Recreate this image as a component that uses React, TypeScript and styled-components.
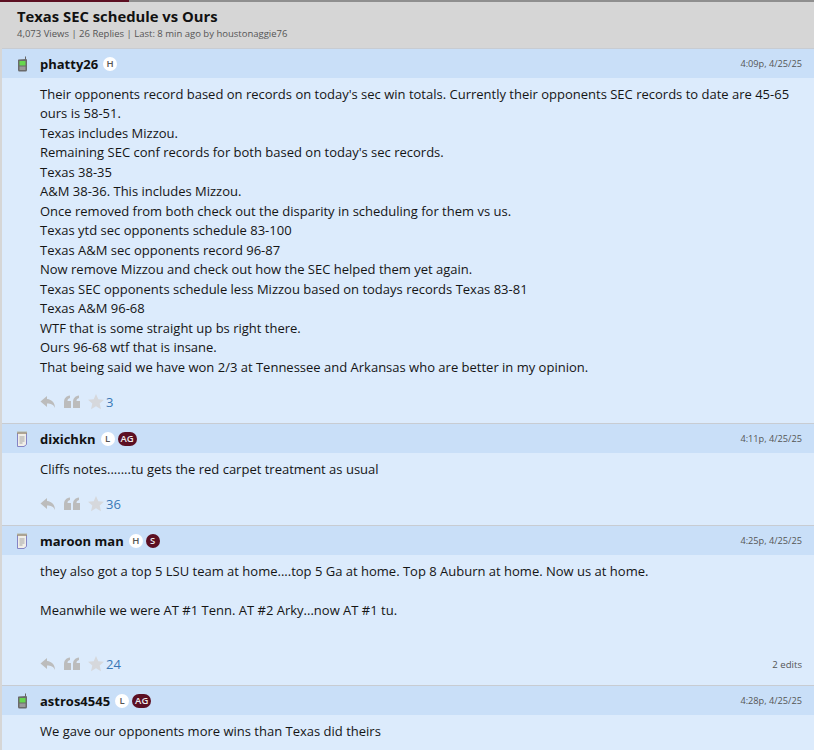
import React from 'react';
import styled, { createGlobalStyle } from 'styled-components';

const GlobalStyle = createGlobalStyle`
  html, body {
    margin: 0;
    padding: 0;
    height: 750px;
    overflow: hidden;
    background: #dcdcdc;
  }
  body {
    font-family: 'Open Sans', 'Noto Sans', sans-serif;
    color: #111;
  }
`;

const Page = styled.div`
  width: 814px;
  height: 750px;
  overflow: hidden;
  padding-left: 2px;
  box-sizing: border-box;
  background: #d6d6d6;
`;
const TopRule = styled.div`
  height: 2px;
  margin-left: -2px;
  background: linear-gradient(to right, #5c0f22 129px, #8f8f8f 129px);
`;
const ThreadHead = styled.header`
  height: 46px;
  padding: 5px 0 0 15px;
  box-sizing: border-box;
  background: #d6d6d6;
`;
const ThreadTitle = styled.h1`
  margin: 0;
  font-size: 14.8px;
  line-height: 18px;
  font-weight: 700;
  color: #111;
`;
const ThreadMeta = styled.div`
  margin-top: 2px;
  font-size: 9.5px;
  line-height: 14px;
  color: #555;
`;
const Post = styled.article`
  background: #dcebfc;
  border-top: 1px solid #c8ccd2;
`;
const PostHead = styled.div`
  height: 29px;
  display: flex;
  align-items: center;
  background: #c9dff8;
  padding: 0 12px 0 14px;
`;
const DeviceSlot = styled.div`
  width: 24px;
  display: flex;
  align-items: center;
`;
const Username = styled.span`
  font-size: 13px;
  font-weight: 700;
  color: #111;
  margin-right: 5px;
`;
const Badge = styled.span<{ $maroon?: boolean; $wide?: boolean }>`
  display: inline-flex;
  align-items: center;
  justify-content: center;
  height: 14px;
  min-width: 14px;
  padding: ${(p) => (p.$wide ? '0 3px' : '0')};
  box-sizing: border-box;
  border-radius: 7px;
  margin-right: 3px;
  font-size: 9.5px;
  font-weight: 600;
  background: ${(p) => (p.$maroon ? '#5c0f22' : '#fff')};
  color: ${(p) => (p.$maroon ? '#eee' : '#555')};
`;
const Stamp = styled.span`
  margin-left: auto;
  font-size: 9.2px;
  color: #555;
`;
const Body = styled.div<{ $height: number }>`
  height: ${(p) => p.$height}px;
  padding: 6.5px 12px 0 38px;
  box-sizing: border-box;
  font-size: 13px;
  line-height: 19.5px;
  color: #151515;
`;
const Line = styled.div`
  min-height: 19.5px;
  white-space: nowrap;
`;
const Actions = styled.div`
  height: 38px;
  padding: 0 12px 4px 38px;
  box-sizing: border-box;
  display: flex;
  align-items: center;
`;
const ActionIcon = styled.svg`
  width: 16px;
  height: 14px;
  fill: #bcbcbc;
  margin-right: 8px;
  flex: none;
`;
const StarIcon = styled.svg`
  width: 16px;
  height: 16px;
  fill: #d6d8dc;
  flex: none;
  margin-right: 2px;
`;
const Count = styled.span`
  font-size: 13px;
  color: #3a78b5;
`;
const Edits = styled.span`
  margin-left: auto;
  font-size: 9.6px;
  color: #555;
`;

function Phone() {
  return (
    <svg width="12" height="16" viewBox="0 0 12 16">
      <path d="M9 0.500h1v3H9z" fill="#666" />
      <path d="M2.500 3.500 10 3a1 1 0 0 1 1 1v10a1.500 1.500 0 0 1-1.500 1.500H3.500A1.500 1.500 0 0 1 2 14V4z" fill="#6a6a6a" />
      <rect x="3.500" y="5" width="6" height="4.500" fill="#66d84e" />
      <rect x="3.500" y="10.500" width="6" height="3.500" fill="#9a9a9a" />
    </svg>
  );
}

function Notepad() {
  return (
    <svg width="12" height="16" viewBox="0 0 12 16">
      <path d="M1.500 2h9v11.500l-2.500 2H1.500z" fill="#f0eee8" stroke="#8484c4" />
      <path d="M2 .500v2.500M4 .500v2.500M6 .500v2.500M8 .500v2.500M10 .500v2.500" stroke="#a8924e" />
      <path d="M3.500 6h5M3.500 8h5M3.500 10h5M3.500 12h3" stroke="#a3a3a3" />
    </svg>
  );
}

function Reply() {
  return (
    <ActionIcon viewBox="0 0 16 14">
      <path d="M7 1 0.500 6.500 7 12V8.500c4 0 6.500 1 8 4.500 0-5-3-8.500-8-9z" />
    </ActionIcon>
  );
}

function Quote() {
  return (
    <ActionIcon viewBox="0 0 16 14">
      <path d="M0 13V7c0-3.500 2-6 6-6.500V3c-1.500.4-2.500 1.200-2.500 3H7v7zM9 13V7c0-3.500 2-6 6-6.500V3c-1.500.4-2.500 1.200-2.500 3H16v7z" />
    </ActionIcon>
  );
}

function Star() {
  return (
    <StarIcon viewBox="0 0 16 16">
      <path d="M8 0l2.300 5.300 5.700.5-4.300 3.800 1.300 5.600L8 12.300 3 15.200l1.300-5.600L0 5.800l5.700-.5z" />
    </StarIcon>
  );
}

type PostData = {
  user: string;
  device: 'phone' | 'pad';
  badges: { label: string; maroon?: boolean; wide?: boolean }[];
  stamp: string;
  lines: string[];
  bodyHeight: number;
  stars: number;
  edits?: string;
};

const posts: PostData[] = [
  {
    user: 'phatty26',
    device: 'phone',
    badges: [{ label: 'H' }],
    stamp: '4:09p, 4/25/25',
    bodyHeight: 307,
    stars: 3,
    lines: [
      "Their opponents record based on records on today's sec win totals. Currently their opponents SEC records to date are 45-65",
      'ours is 58-51.',
      'Texas includes Mizzou.',
      "Remaining SEC conf records for both based on today's sec records.",
      'Texas 38-35',
      'A&M 38-36. This includes Mizzou.',
      'Once removed from both check out the disparity in scheduling for them vs us.',
      'Texas ytd sec opponents schedule 83-100',
      'Texas A&M sec opponents record 96-87',
      'Now remove Mizzou and check out how the SEC helped them yet again.',
      'Texas SEC opponents schedule less Mizzou based on todays records Texas 83-81',
      'Texas A&M 96-68',
      'WTF that is some straight up bs right there.',
      'Ours 96-68 wtf that is insane.',
      'That being said we have won 2/3 at Tennessee and Arkansas who are better in my opinion.',
    ],
  },
  {
    user: 'dixichkn',
    device: 'pad',
    badges: [{ label: 'L' }, { label: 'AG', maroon: true, wide: true }],
    stamp: '4:11p, 4/25/25',
    bodyHeight: 34,
    stars: 36,
    lines: ['Cliffs notes.......tu gets the red carpet treatment as usual'],
  },
  {
    user: 'maroon man',
    device: 'pad',
    badges: [{ label: 'H' }, { label: 'S', maroon: true }],
    stamp: '4:25p, 4/25/25',
    bodyHeight: 92,
    stars: 24,
    edits: '2 edits',
    lines: [
      'they also got a top 5 LSU team at home....top 5 Ga at home. Top 8 Auburn at home. Now us at home.',
      '',
      'Meanwhile we were AT #1 Tenn. AT #2 Arky...now AT #1 tu.',
    ],
  },
  {
    user: 'astros4545',
    device: 'phone',
    badges: [{ label: 'L' }, { label: 'AG', maroon: true, wide: true }],
    stamp: '4:28p, 4/25/25',
    bodyHeight: 60,
    stars: 0,
    lines: ['We gave our opponents more wins than Texas did theirs'],
  },
];

export default function App() {
  return (
    <>
      <GlobalStyle />
      <Page>
        <TopRule />
        <ThreadHead>
          <ThreadTitle>Texas SEC schedule vs Ours</ThreadTitle>
          <ThreadMeta>4,073 Views | 26 Replies | Last: 8 min ago by houstonaggie76</ThreadMeta>
        </ThreadHead>
        {posts.map((post) => (
          <Post key={post.user}>
            <PostHead>
              <DeviceSlot>{post.device === 'phone' ? <Phone /> : <Notepad />}</DeviceSlot>
              <Username>{post.user}</Username>
              {post.badges.map((badge) => (
                <Badge key={badge.label} $maroon={badge.maroon} $wide={badge.wide}>
                  {badge.label}
                </Badge>
              ))}
              <Stamp>{post.stamp}</Stamp>
            </PostHead>
            <Body $height={post.bodyHeight}>
              {post.lines.map((line, index) => (
                <Line key={index}>{line}</Line>
              ))}
            </Body>
            {post.stars > 0 && (
              <Actions>
                <Reply />
                <Quote />
                <Star />
                <Count>{post.stars}</Count>
                {post.edits && <Edits>{post.edits}</Edits>}
              </Actions>
            )}
          </Post>
        ))}
      </Page>
    </>
  );
}
